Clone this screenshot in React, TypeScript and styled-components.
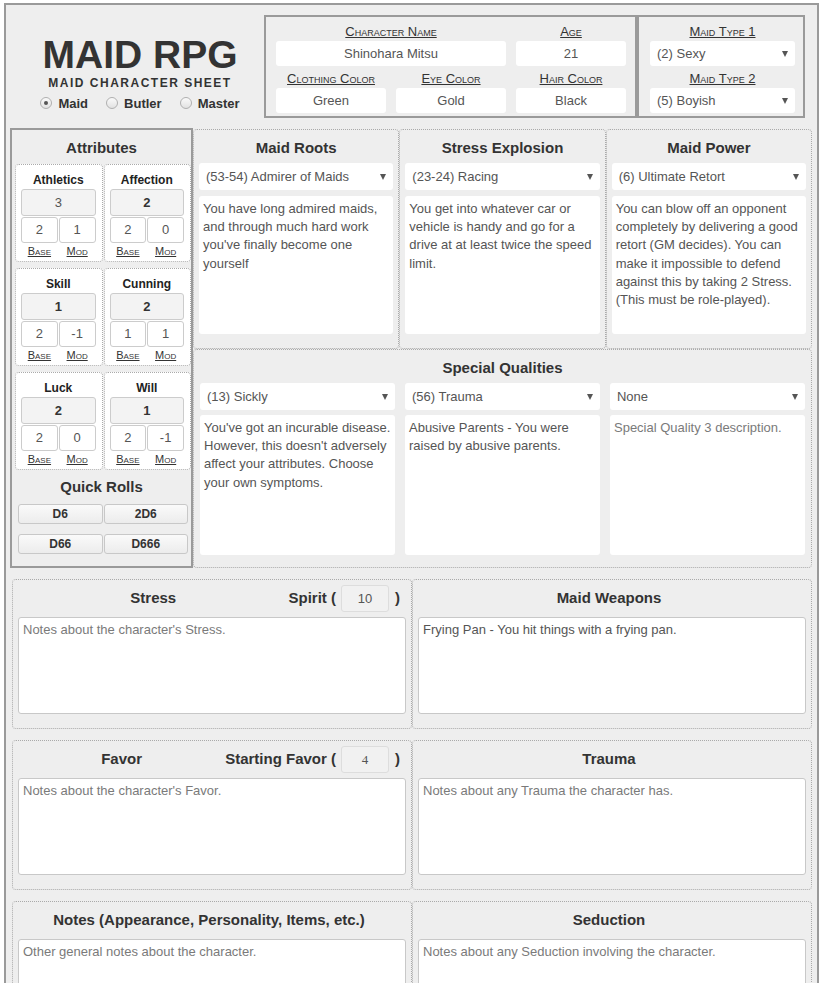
import React from "react";
import styled, { createGlobalStyle } from "styled-components";

const GlobalStyle = createGlobalStyle`
  html, body {
    margin: 0;
    padding: 0;
    background: #fff;
  }
  body {
    font-family: "Liberation Sans", Arial, sans-serif;
    color: #333;
  }
  * {
    box-sizing: border-box;
  }
`;

const Sheet = styled.div`
  width: 815px;
  margin: 3px 0 0 4px;
  border: 2px solid #9a9a9a;
  background: #eee;
  padding: 0 4px 12px 4px;
`;

/* ---------- header ---------- */

const Header = styled.header`
  display: flex;
  align-items: flex-start;
  padding-top: 10px;
`;

const Brand = styled.div`
  width: 254px;
  padding: 21px 0 0 6px;
  display: flex;
  flex-direction: column;
  align-items: center;
`;

const Title = styled.h1`
  margin: 0;
  font-size: 39px;
  line-height: 38px;
  font-weight: bold;
  color: #333;
`;

const Subtitle = styled.div`
  margin-top: 2px;
  font-size: 12px;
  line-height: 14px;
  font-weight: bold;
  letter-spacing: 1.5px;
  color: #333;
`;

const RadioRow = styled.div`
  display: flex;
  align-items: center;
  height: 20px;
  margin-top: 3px;
  gap: 18px;
`;

const RadioItem = styled.label`
  display: flex;
  align-items: center;
  gap: 6px;
  font-size: 13px;
  font-weight: bold;
  color: #333;
`;

const RadioDot = styled.span<{ $checked?: boolean }>`
  width: 12px;
  height: 12px;
  border-radius: 50%;
  border: 1px solid #b0b0b0;
  background: linear-gradient(#fafafa, #e2e2e2);
  display: flex;
  align-items: center;
  justify-content: center;

  &::after {
    content: "";
    width: 4px;
    height: 4px;
    border-radius: 50%;
    background: ${(p) => (p.$checked ? "#555" : "transparent")};
  }
`;

const InfoBox = styled.div<{ $width: number }>`
  width: ${(p) => p.$width}px;
  height: 103px;
  border: 2px solid #9a9a9a;
  padding: 6px 0 0 10px;
  display: grid;
  grid-template-columns: repeat(3, 110px);
  column-gap: 10px;
  row-gap: 4px;
  align-content: start;
`;

const TypeBox = styled(InfoBox)`
  padding-left: 11px;
  grid-template-columns: 145px;
`;

const Field = styled.div<{ $span?: number }>`
  grid-column: span ${(p) => p.$span || 1};
  display: flex;
  flex-direction: column;
`;

const FieldLabel = styled.div`
  font-size: 13px;
  line-height: 18px;
  font-variant: small-caps;
  text-decoration: underline;
  text-align: center;
  color: #333;
`;

const HeaderInput = styled.div`
  height: 25px;
  line-height: 25px;
  background: #fff;
  border-radius: 3px;
  text-align: center;
  font-size: 13px;
  color: #555;
`;

/* ---------- select ---------- */

const SelectBox = styled.div<{ $height?: number }>`
  height: ${(p) => p.$height || 27}px;
  background: #fff;
  border-radius: 3px;
  padding: 0 7px 0 7px;
  display: flex;
  align-items: center;
  justify-content: space-between;
  font-size: 13px;
  color: #555;
  white-space: nowrap;
`;

const Arrow = styled.span`
  width: 0;
  height: 0;
  border-left: 3.5px solid transparent;
  border-right: 3.5px solid transparent;
  border-top: 6px solid #555;
`;

function Select({ value, height }: { value: string; height?: number }) {
  return (
    <SelectBox $height={height}>
      <span>{value}</span>
      <Arrow />
    </SelectBox>
  );
}

/* ---------- body ---------- */

const Body = styled.div`
  display: flex;
  align-items: flex-start;
  margin-top: 10px;
`;

const AttrPanel = styled.section`
  width: 183px;
  height: 440px;
  border: 2px solid #9a9a9a;
  padding-top: 8px;
`;

const PanelTitle = styled.h3`
  margin: 0;
  font-size: 15px;
  line-height: 20px;
  font-weight: bold;
  text-align: center;
  color: #333;
`;

const AttrGrid = styled.div`
  margin-top: 6px;
  padding-left: 3px;
  display: grid;
  grid-template-columns: 1fr 1fr;
  column-gap: 1px;
  row-gap: 6px;
`;

const AttrCard = styled.div`
  height: 98px;
  border: 1px dotted #aaa;
  border-radius: 4px;
  background: #fff;
  padding: 6px 6px 4px 5px;
`;

const AttrName = styled.div`
  font-size: 12px;
  line-height: 18px;
  font-weight: bold;
  text-align: center;
  color: #222;
`;

const TotalBox = styled.div<{ $strong?: boolean }>`
  height: 27px;
  line-height: 25px;
  border: 1px solid #ccc;
  border-radius: 3px;
  background: #f3f3f3;
  text-align: center;
  font-size: 13px;
  font-weight: ${(p) => (p.$strong ? "bold" : "normal")};
  color: ${(p) => (p.$strong ? "#333" : "#555")};
`;

const SplitRow = styled.div`
  margin-top: 1px;
  display: grid;
  grid-template-columns: 1fr 1fr;
  column-gap: 1px;
`;

const SmallBox = styled.div`
  height: 26px;
  line-height: 24px;
  border: 1px solid #ccc;
  border-radius: 3px;
  background: #fff;
  text-align: center;
  font-size: 13px;
  color: #555;
`;

const SubLabels = styled(SplitRow)`
  margin-top: 2px;
  font-size: 11px;
  line-height: 12px;
  font-variant: small-caps;
  text-decoration: underline;
  text-align: center;
  color: #333;
`;

const RollsTitle = styled(PanelTitle)`
  margin-top: 7px;
`;

const RollGrid = styled.div`
  margin-top: 7px;
  padding: 0 3px 0 6px;
  display: grid;
  grid-template-columns: 1fr 1fr;
  column-gap: 1px;
  row-gap: 10px;
`;

const RollButton = styled.button`
  height: 20px;
  padding: 0;
  border: 1px solid #c8c8c8;
  border-radius: 3px;
  background: linear-gradient(#fafafa, #ececec);
  font-family: "Liberation Sans", Arial, sans-serif;
  font-size: 12px;
  font-weight: bold;
  color: #333;
`;

const RightGrid = styled.div`
  width: 619px;
  margin-top: 1px;
  display: grid;
  grid-template-columns: repeat(3, 1fr);
`;

const DotPanel = styled.section<{ $span?: number; $tight?: boolean }>`
  grid-column: span ${(p) => p.$span || 1};
  border: 1px dotted #aaa;
  border-radius: 4px;
  padding: 8px 5px ${(p) => (p.$tight ? 12 : 14)}px;
`;

const PanelBody = styled.div`
  margin-top: 5px;
  display: flex;
  flex-direction: column;
  gap: 6px;
`;

const QualityGrid = styled.div`
  margin-top: 5px;
  padding: 0 1px;
  display: grid;
  grid-template-columns: repeat(3, 1fr);
  column-gap: 10px;
  row-gap: 5px;
`;

const Notes = styled.textarea<{ $height: number; $bordered?: boolean }>`
  display: block;
  width: 100%;
  height: ${(p) => p.$height}px;
  margin: 0;
  padding: ${(p) => (p.$bordered ? "3px 4px" : "4px 3px 4px 4px")};
  border: ${(p) => (p.$bordered ? "1px solid #c8c8c8" : "0")};
  border-radius: 3px;
  background: #fff;
  resize: none;
  overflow: hidden;
  font-family: "Liberation Sans", Arial, sans-serif;
  font-size: 13px;
  line-height: 18.2px;
  color: #555;

  &::placeholder {
    color: #7a7a7a;
  }
`;

/* ---------- lower ---------- */

const LowerGrid = styled.div`
  width: 800px;
  margin: 11px 0 0 2px;
  display: grid;
  grid-template-columns: 1fr 1fr;
  row-gap: 11px;
`;

const NotePanel = styled.section`
  height: 150px;
  border: 1px dotted #aaa;
  border-radius: 4px;
  padding: 5px 5px 13px;
`;

const NoteHead = styled.div`
  height: 27px;
  margin-bottom: 5px;
  display: flex;
  align-items: center;
  padding-right: 6px;
  padding-bottom: 2px;
`;

const NoteTitle = styled(PanelTitle)`
  flex: 1;
`;

const CountLabel = styled.span`
  font-size: 15px;
  font-weight: bold;
  color: #333;
`;

const CountInput = styled.div<{ $serif?: boolean }>`
  width: 48px;
  height: 27px;
  margin: 2px 6px 0 5px;
  flex-shrink: 0;
  line-height: 25px;
  border: 1px solid #ddd;
  border-radius: 3px;
  background: #f1f1f1;
  text-align: center;
  font-family: ${(p) =>
    p.$serif ? '"Liberation Serif", "Times New Roman", serif' : "inherit"};
  font-size: 13px;
  color: #555;
`;

type Attr = { name: string; total: number; base: number; mod: number; strong: boolean };

const attributes: Attr[] = [
  { name: "Athletics", total: 3, base: 2, mod: 1, strong: false },
  { name: "Affection", total: 2, base: 2, mod: 0, strong: true },
  { name: "Skill", total: 1, base: 2, mod: -1, strong: true },
  { name: "Cunning", total: 2, base: 1, mod: 1, strong: true },
  { name: "Luck", total: 2, base: 2, mod: 0, strong: true },
  { name: "Will", total: 1, base: 2, mod: -1, strong: true },
];

const topPanels = [
  {
    title: "Maid Roots",
    choice: "(53-54) Admirer of Maids",
    text: "You have long admired maids, and through much hard work you've finally become one yourself",
  },
  {
    title: "Stress Explosion",
    choice: "(23-24) Racing",
    text: "You get into whatever car or vehicle is handy and go for a drive at at least twice the speed limit.",
  },
  {
    title: "Maid Power",
    choice: "(6) Ultimate Retort",
    text: "You can blow off an opponent completely by delivering a good retort (GM decides). You can make it impossible to defend against this by taking 2 Stress. (This must be role-played).",
  },
];

const qualities = [
  {
    choice: "(13) Sickly",
    text: "You've got an incurable disease. However, this doesn't adversely affect your attributes. Choose your own symptoms.",
  },
  { choice: "(56) Trauma", text: "Abusive Parents - You were raised by abusive parents." },
  { choice: "None", text: "", placeholder: "Special Quality 3 description." },
];

type NoteDef = {
  title: string;
  value?: string;
  placeholder?: string;
  counter?: { label: string; value: string; serif?: boolean };
};

const notes: NoteDef[] = [
  {
    title: "Stress",
    placeholder: "Notes about the character's Stress.",
    counter: { label: "Spirit (", value: "10" },
  },
  { title: "Maid Weapons", value: "Frying Pan - You hit things with a frying pan." },
  {
    title: "Favor",
    placeholder: "Notes about the character's Favor.",
    counter: { label: "Starting Favor (", value: "4", serif: true },
  },
  { title: "Trauma", placeholder: "Notes about any Trauma the character has." },
  {
    title: "Notes (Appearance, Personality, Items, etc.)",
    placeholder: "Other general notes about the character.",
  },
  { title: "Seduction", placeholder: "Notes about any Seduction involving the character." },
];

export default function App() {
  return (
    <>
      <GlobalStyle />
      <Sheet>
        <Header>
          <Brand>
            <Title>MAID RPG</Title>
            <Subtitle>MAID CHARACTER SHEET</Subtitle>
            <RadioRow>
              <RadioItem>
                <RadioDot $checked />
                Maid
              </RadioItem>
              <RadioItem>
                <RadioDot />
                Butler
              </RadioItem>
              <RadioItem>
                <RadioDot />
                Master
              </RadioItem>
            </RadioRow>
          </Brand>

          <InfoBox $width={373}>
            <Field $span={2}>
              <FieldLabel>Character Name</FieldLabel>
              <HeaderInput>Shinohara Mitsu</HeaderInput>
            </Field>
            <Field>
              <FieldLabel>Age</FieldLabel>
              <HeaderInput>21</HeaderInput>
            </Field>
            <Field>
              <FieldLabel>Clothing Color</FieldLabel>
              <HeaderInput>Green</HeaderInput>
            </Field>
            <Field>
              <FieldLabel>Eye Color</FieldLabel>
              <HeaderInput>Gold</HeaderInput>
            </Field>
            <Field>
              <FieldLabel>Hair Color</FieldLabel>
              <HeaderInput>Black</HeaderInput>
            </Field>
          </InfoBox>

          <TypeBox $width={168}>
            <Field>
              <FieldLabel>Maid Type 1</FieldLabel>
              <Select value="(2) Sexy" height={25} />
            </Field>
            <Field>
              <FieldLabel>Maid Type 2</FieldLabel>
              <Select value="(5) Boyish" height={25} />
            </Field>
          </TypeBox>
        </Header>

        <Body>
          <AttrPanel>
            <PanelTitle>Attributes</PanelTitle>
            <AttrGrid>
              {attributes.map((a) => (
                <AttrCard key={a.name}>
                  <AttrName>{a.name}</AttrName>
                  <TotalBox $strong={a.strong}>{a.total}</TotalBox>
                  <SplitRow>
                    <SmallBox>{a.base}</SmallBox>
                    <SmallBox>{a.mod}</SmallBox>
                  </SplitRow>
                  <SubLabels>
                    <span>Base</span>
                    <span>Mod</span>
                  </SubLabels>
                </AttrCard>
              ))}
            </AttrGrid>
            <RollsTitle>Quick Rolls</RollsTitle>
            <RollGrid>
              <RollButton>D6</RollButton>
              <RollButton>2D6</RollButton>
              <RollButton>D66</RollButton>
              <RollButton>D666</RollButton>
            </RollGrid>
          </AttrPanel>

          <RightGrid>
            {topPanels.map((p) => (
              <DotPanel key={p.title}>
                <PanelTitle>{p.title}</PanelTitle>
                <PanelBody>
                  <Select value={p.choice} />
                  <Notes $height={138} readOnly defaultValue={p.text} />
                </PanelBody>
              </DotPanel>
            ))}
            <DotPanel $span={3} $tight>
              <PanelTitle>Special Qualities</PanelTitle>
              <QualityGrid>
                {qualities.map((q) => (
                  <Select key={q.choice} value={q.choice} />
                ))}
                {qualities.map((q) => (
                  <Notes
                    key={q.choice}
                    $height={140}
                    readOnly
                    defaultValue={q.text}
                    placeholder={q.placeholder}
                  />
                ))}
              </QualityGrid>
            </DotPanel>
          </RightGrid>
        </Body>

        <LowerGrid>
          {notes.map((n) => (
            <NotePanel key={n.title}>
              <NoteHead>
                <NoteTitle>{n.title}</NoteTitle>
                {n.counter && (
                  <>
                    <CountLabel>{n.counter.label}</CountLabel>
                    <CountInput $serif={n.counter.serif}>{n.counter.value}</CountInput>
                    <CountLabel>)</CountLabel>
                  </>
                )}
              </NoteHead>
              <Notes
                $height={97}
                $bordered
                readOnly
                defaultValue={n.value || ""}
                placeholder={n.placeholder}
              />
            </NotePanel>
          ))}
        </LowerGrid>
      </Sheet>
    </>
  );
}
